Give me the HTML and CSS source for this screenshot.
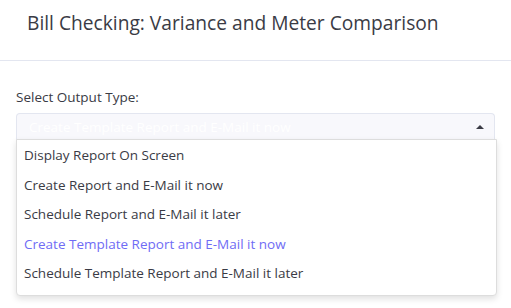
FILE: index.html
```html
<!DOCTYPE html>
<html lang="en">
<head>
    <meta charset="UTF-8">
    <title>Bill Checking</title>
    <link rel="stylesheet" href="styles.css">
</head>
<body>
    <div class="card-header">
        <h1>Bill Checking: Variance and Meter Comparison</h1>
    </div>
    <div class="card-body">
        <label class="field-label">Select Output Type:</label>
        <div class="select-wrap">
            <div class="select-box">
                <span class="select-value">Create Template Report and E-Mail it now</span>
                <span class="caret"></span>
            </div>
            <ul class="dropdown">
                <li>Display Report On Screen</li>
                <li>Create Report and E-Mail it now</li>
                <li>Schedule Report and E-Mail it later</li>
                <li class="active">Create Template Report and E-Mail it now</li>
                <li>Schedule Template Report and E-Mail it later</li>
            </ul>
        </div>
    </div>
</body>
</html>
```
FILE: styles.css
```css
:root {
    --text-color: #3a3b45;
    --border-color: #e3e6f0;
    --active-color: #6f6cf5;
}

* {
    box-sizing: border-box;
    margin: 0;
    padding: 0;
}

body {
    font-family: "Open Sans", "Noto Sans", sans-serif;
    color: var(--text-color);
    background: #ffffff;
    width: 511px;
    height: 308px;
    overflow: hidden;
}

.card-header {
    height: 61px;
    padding: 9px 27px 0;
    border-bottom: 1px solid var(--border-color);
}

h1 {
    font-size: 19.2px;
    font-weight: 400;
    line-height: 28px;
}

.card-body {
    padding: 26px 16px 0;
}

.field-label {
    display: block;
    font-size: 13.5px;
    line-height: 20px;
    margin-bottom: 6px;
}

.select-wrap {
    position: relative;
    width: 479px;
}

.select-box {
    height: 27px;
    border: 1px solid var(--border-color);
    border-bottom: none;
    border-radius: 4px 4px 0 0;
    background: #f8f8fc;
    display: flex;
    align-items: center;
    justify-content: space-between;
    padding: 0 10px 0 12px;
}

.select-value {
    color: #ffffff;
    font-size: 13.5px;
}

.caret {
    width: 0;
    height: 0;
    border-left: 4px solid transparent;
    border-right: 4px solid transparent;
    border-bottom: 4px solid #3a3b45;
}

.dropdown {
    list-style: none;
    position: absolute;
    top: 26px;
    left: 0;
    width: 481px;
    background: #ffffff;
    border: 1px solid #dddddd;
    border-radius: 0 0 4px 4px;
    box-shadow: 0 3px 6px rgba(0, 0, 0, 0.12);
    padding: 1px 0 6px;
}

.dropdown li {
    font-size: 13.5px;
    line-height: 29.5px;
    padding: 0 7px;
}

.dropdown li.active {
    color: var(--active-color);
}
```
